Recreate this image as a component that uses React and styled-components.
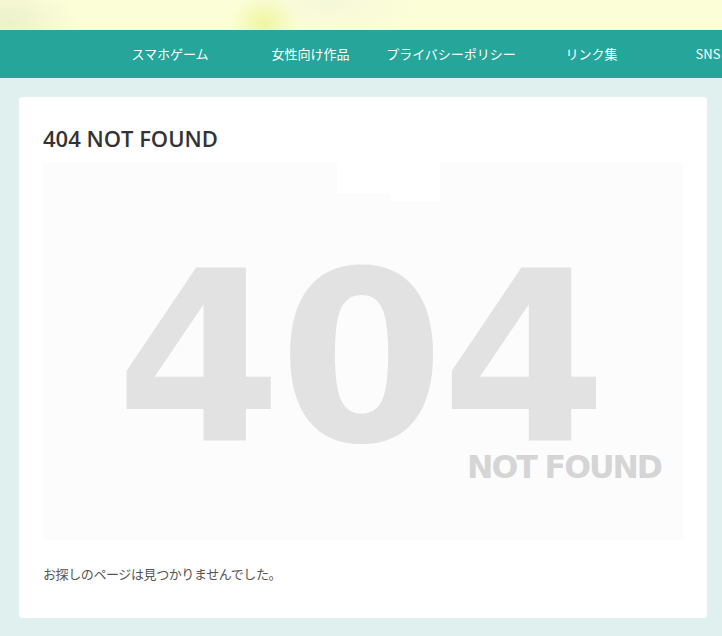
import React from "react";
import styled, { createGlobalStyle } from "styled-components";

const Global = createGlobalStyle`
  html, body { margin: 0; padding: 0; }
  body {
    background: #dff0ef;
    font-family: "Noto Sans", "Noto Sans CJK JP", sans-serif;
    color: #333;
  }
`;

const Page = styled.div`
  width: 722px;
  min-height: 636px;
  overflow: hidden;
  background: #dff0ef;
`;

const HeaderImage = styled.div`
  height: 30px;
  background:
    radial-gradient(ellipse 34px 30px at 264px 24px, rgba(238, 244, 150, 0.85), rgba(238, 244, 150, 0) 100%),
    radial-gradient(ellipse 70px 40px at 8px 22px, rgba(226, 232, 195, 0.6), rgba(226, 232, 195, 0) 100%),
    radial-gradient(ellipse 90px 30px at 330px 4px, rgba(242, 245, 218, 0.6), rgba(242, 245, 218, 0) 100%),
    #fcfed8;
`;

const Nav = styled.nav`
  height: 48px;
  background: #26a59a;
  display: flex;
  align-items: center;
  padding-left: 100px;
  white-space: nowrap;
`;

const NavItem = styled.a`
  flex: 0 0 ${(p) => p.$w}px;
  text-align: center;
  color: #fff;
  font-family: "Noto Sans CJK JP", "Noto Sans", sans-serif;
  font-size: 13px;
  text-decoration: none;
  line-height: 48px;
`;

const Main = styled.main`
  padding: 19px 15px 19px 19px;
`;

const Card = styled.article`
  background: #fff;
  border-radius: 3px;
  padding: 27px 24px 34px;
`;

const Title = styled.h1`
  margin: 0 0 11px;
  font-family: "Open Sans", "Noto Sans", sans-serif;
  font-weight: 600;
  font-size: 22px;
  line-height: 28px;
  color: #333;
`;

const Figure = styled.div`
  position: relative;
  width: 640px;
  height: 377px;
  background: #fcfcfc;
  display: flex;
  flex-direction: column;
  align-items: center;
  padding-top: 106px;
  box-sizing: border-box;
`;

const Blank = styled.div`
  position: absolute;
  top: 0;
  left: ${(p) => p.$x}px;
  width: ${(p) => p.$w}px;
  height: ${(p) => p.$h}px;
  background: #fff;
`;

const Big = styled.div`
  font-family: "DejaVu Sans", sans-serif;
  font-weight: 700;
  font-size: 238px;
  line-height: 180px;
  height: 180px;
  color: #e2e2e2;
  letter-spacing: -3px;
  margin-left: -6px;
`;

const Small = styled.div`
  align-self: flex-end;
  margin-right: 22px;
  margin-top: 6px;
  font-family: "DejaVu Sans", sans-serif;
  font-weight: 700;
  font-size: 31.5px;
  line-height: 24px;
  height: 24px;
  letter-spacing: -2px;
  color: #d5d5d5;
`;

const Message = styled.p`
  margin: 24px 0 0;
  font-family: "Noto Sans CJK JP", sans-serif;
  font-size: 13px;
  letter-spacing: -0.4px;
  line-height: 20px;
  color: #555;
`;

const items = [
  { label: "スマホゲーム", w: 140 },
  { label: "女性向け作品", w: 141 },
  { label: "プライバシーポリシー", w: 140 },
  { label: "リンク集", w: 141 },
  { label: "SNS", w: 92 },
];

export default function App() {
  return (
    <Page>
      <Global />
      <HeaderImage />
      <Nav>
        {items.map((it) => (
          <NavItem key={it.label} href="#" $w={it.w}>
            {it.label}
          </NavItem>
        ))}
      </Nav>
      <Main>
        <Card>
          <Title>404 NOT FOUND</Title>
          <Figure>
            <Blank $x={294} $w={53} $h={30} />
            <Blank $x={347} $w={50} $h={38} />
            <Big>404</Big>
            <Small>NOT FOUND</Small>
          </Figure>
          <Message>お探しのページは見つかりませんでした。</Message>
        </Card>
      </Main>
    </Page>
  );
}
